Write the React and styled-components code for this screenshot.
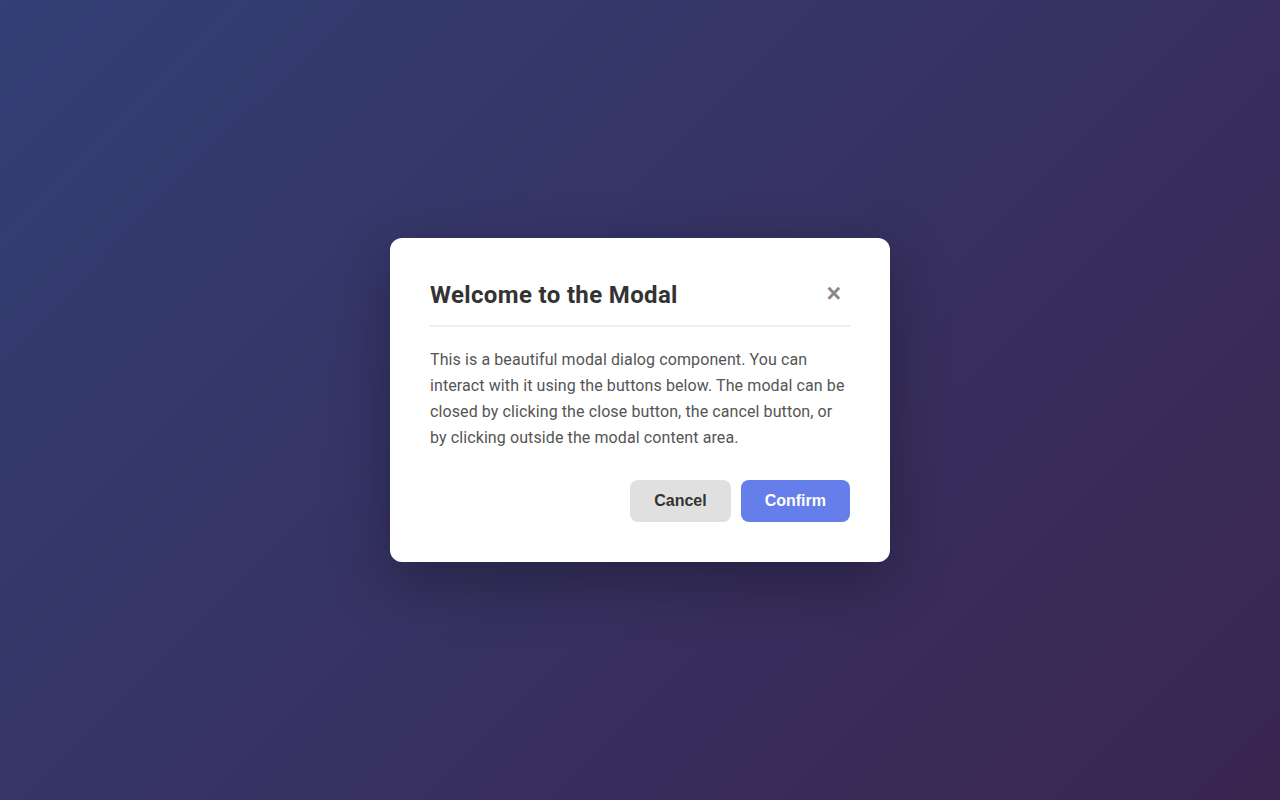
import React from "react";
import styled, { createGlobalStyle } from "styled-components";

const GlobalStyle = createGlobalStyle`
  * { box-sizing: border-box; }
  html, body { margin: 0; padding: 0; }
  body {
    font-family: Roboto, "Noto Sans", sans-serif;
  }
`;

const Page = styled.div`
  width: 100vw;
  height: 100vh;
  background: linear-gradient(135deg, #667eea 0%, #764ba2 100%);
`;

const Backdrop = styled.div`
  width: 100%;
  height: 100%;
  background: rgba(0, 0, 0, 0.5);
  display: flex;
  align-items: center;
  justify-content: center;
`;

const Modal = styled.div`
  width: 500px;
  background: #fff;
  border-radius: 12px;
  padding: 40px;
  box-shadow: 0 20px 60px rgba(0, 0, 0, 0.3);
`;

const Header = styled.div`
  display: flex;
  justify-content: space-between;
  align-items: center;
  padding-bottom: 13px;
  border-bottom: 2px solid #eee;
  margin-bottom: 20px;
`;

const Title = styled.h2`
  margin: 0;
  font-size: 24px;
  font-weight: 700;
  letter-spacing: 0.35px;
  color: #333;
  line-height: 34px;
`;

const CloseButton = styled.button`
  border: none;
  background: none;
  padding: 0;
  margin: 0 9px 4px 0;
  font-family: "Liberation Sans", Arial, sans-serif;
  font-size: 25px;
  font-weight: 700;
  line-height: 1;
  color: #888;
  cursor: pointer;
`;

const Body = styled.p`
  margin: 0;
  font-size: 16px;
  line-height: 26px;
  letter-spacing: 0.1px;
  color: #555;
`;

const Footer = styled.div`
  display: flex;
  justify-content: flex-end;
  gap: 10px;
  margin-top: 29px;
`;

const Button = styled.button`
  border: none;
  border-radius: 8px;
  padding: 12px 24px;
  font-family: "Liberation Sans", Arial, sans-serif;
  font-size: 16px;
  font-weight: 700;
  line-height: 18px;
  cursor: pointer;
  background: ${(p) => (p.$primary ? "#667eea" : "#e0e0e0")};
  color: ${(p) => (p.$primary ? "#fff" : "#333")};
`;

export default function App() {
  return (
    <Page>
      <GlobalStyle />
      <Backdrop>
        <Modal>
          <Header>
            <Title>Welcome to the Modal</Title>
            <CloseButton aria-label="Close">×</CloseButton>
          </Header>
          <Body>
            This is a beautiful modal dialog component. You can interact with
            it using the buttons below. The modal can be closed by clicking the
            close button, the cancel button, or by clicking outside the modal
            content area.
          </Body>
          <Footer>
            <Button>Cancel</Button>
            <Button $primary>Confirm</Button>
          </Footer>
        </Modal>
      </Backdrop>
    </Page>
  );
}
